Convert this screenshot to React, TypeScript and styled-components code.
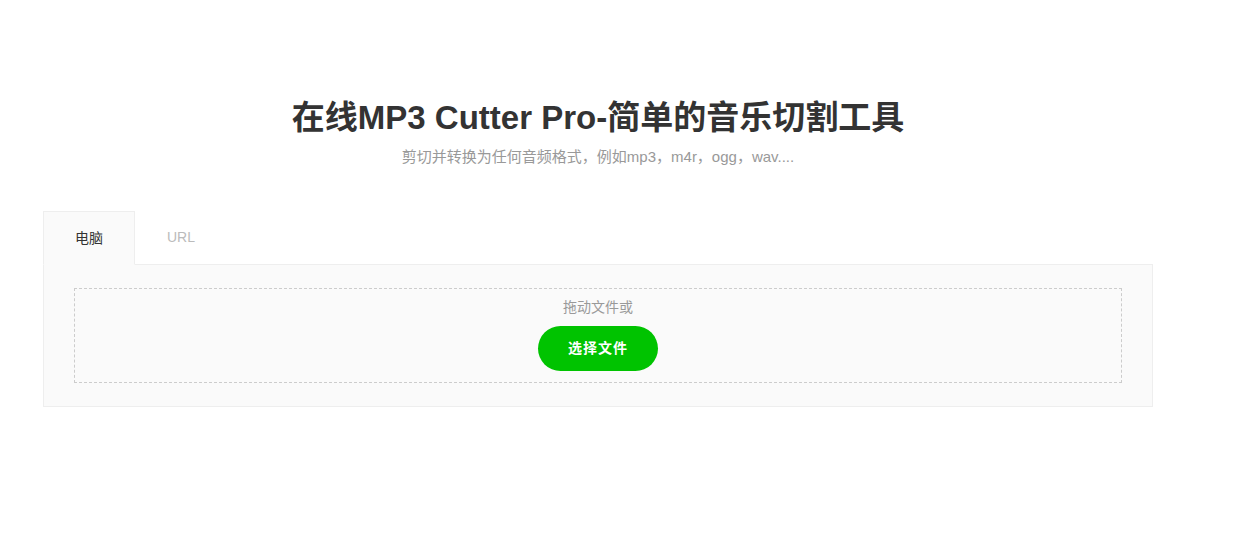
import React, { useState } from "react";
import styled, { createGlobalStyle } from "styled-components";

const GlobalStyle = createGlobalStyle`
  html, body {
    margin: 0;
    padding: 0;
    background: #fff;
    font-family: "Liberation Sans", Arial, "Noto Sans CJK SC", sans-serif;
    color: #333;
  }
  * {
    box-sizing: border-box;
  }
`;

const Page = styled.main`
  width: 1110px;
  margin-left: 43px;
  padding-top: 96px;
`;

const Header = styled.header`
  text-align: center;
  margin-bottom: 44px;

  h1 {
    margin: 0;
    font-size: 33px;
    line-height: 44px;
    font-weight: 700;
    color: #333;
  }

  p {
    margin: 7px 0 0;
    font-size: 15px;
    line-height: 20px;
    color: #999;
  }
`;

const Tabs = styled.nav`
  display: flex;
`;

const Tab = styled.button<{ $active?: boolean }>`
  height: 54px;
  padding: 0 31px 3px;
  margin-bottom: -1px;
  font-family: inherit;
  font-size: 14px;
  color: ${(p) => (p.$active ? "#333" : "#bbb")};
  background: ${(p) => (p.$active ? "#fafafa" : "transparent")};
  border: 1px solid ${(p) => (p.$active ? "#eee" : "transparent")};
  border-bottom: 1px solid ${(p) => (p.$active ? "#fafafa" : "transparent")};
  cursor: pointer;
  position: relative;
  z-index: 1;
`;

const Panel = styled.section`
  background: #fafafa;
  border: 1px solid #eee;
  padding: 23px 30px;
`;

const DropZone = styled.div`
  border: 1px dashed #ccc;
  display: flex;
  flex-direction: column;
  align-items: center;
  padding: 9px 0 11px;

  span {
    font-size: 14px;
    line-height: 18px;
    color: #999;
  }
`;

const PickButton = styled.button`
  margin-top: 10px;
  width: 120px;
  height: 45px;
  padding: 0 0 4px;
  border: none;
  border-radius: 23px;
  background: #00c300;
  color: #fff;
  font-family: inherit;
  font-size: 14px;
  font-weight: 700;
  letter-spacing: 1px;
  cursor: pointer;
`;

const App = () => {
  const [tab, setTab] = useState("pc");
  return (
    <>
      <GlobalStyle />
      <Page>
        <Header>
          <h1>在线MP3 Cutter Pro-简单的音乐切割工具</h1>
          <p>剪切并转换为任何音频格式，例如mp3，m4r，ogg，wav....</p>
        </Header>
        <Tabs>
          <Tab $active={tab === "pc"} onClick={() => setTab("pc")}>
            电脑
          </Tab>
          <Tab $active={tab === "url"} onClick={() => setTab("url")}>
            URL
          </Tab>
        </Tabs>
        <Panel>
          <DropZone>
            <span>拖动文件或</span>
            <PickButton>选择文件</PickButton>
          </DropZone>
        </Panel>
      </Page>
    </>
  );
};

export default App;
